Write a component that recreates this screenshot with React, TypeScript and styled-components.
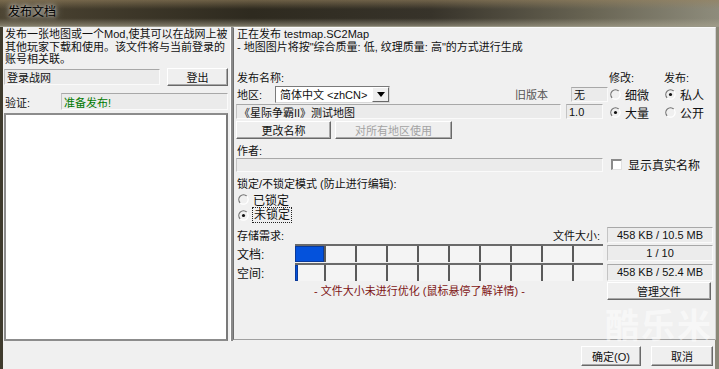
import React from "react";
import styled, { createGlobalStyle } from "styled-components";

const Global = createGlobalStyle`
  html, body { margin: 0; padding: 0; background: #f0f0f0; overflow: hidden; }
  * { box-sizing: border-box; }
`;

const FONT = `"Liberation Sans", "Noto Sans CJK SC", sans-serif`;

function Radio({ checked }: { checked?: boolean }) {
  return (
    <svg width="11" height="11" viewBox="0 0 12 12">
      <path d="M9.6 2.4 A5 5 0 0 0 2.4 9.6" fill="none" stroke="#707070" strokeWidth="1.3" />
      <path d="M2.4 9.6 A5 5 0 0 0 9.6 2.4" fill="none" stroke="#ffffff" strokeWidth="1.3" />
      {checked && <circle cx="6" cy="6" r="1.7" fill="#111" />}
    </svg>
  );
}

export default function App() {
  return (
    <>
      <Global />
      <Window>
        <TitleBar>
          <Title>发布文档</Title>
        </TitleBar>
        <Frame>
          <LeftPanel>
            <LeftGroup>
              <Intro>
                发布一张地图或一个Mod,使其可以在战网上被
                <br />
                其他玩家下载和使用。该文件将与当前登录的
                <br />
                账号相关联。
              </Intro>
              <LoginRow>
                <Field $w={156} $h={16}>登录战网</Field>
                <Button $w={61} $h={18}>登出</Button>
              </LoginRow>
              <VerifyRow>
                <Label>验证:</Label>
                <Field $w={167} $h={17} $color="#007a00">准备发布!</Field>
              </VerifyRow>
              <ListBox />
            </LeftGroup>
          </LeftPanel>

          <RightColumn>
            <RightGroup>
              <Info>
                正在发布 testmap.SC2Map
                <br />
                - 地图图片将按"综合质量: 低, 纹理质量: 高"的方式进行生成
              </Info>

              <TopArea>
                <MainCol>
                  <LabelRow>发布名称:</LabelRow>
                  <RegionRow>
                    <Label $w={39}>地区:</Label>
                    <Select>
                      <SelectText>简体中文 &lt;zhCN&gt;</SelectText>
                      <SelectArrow>
                        <svg width="8" height="5" viewBox="0 0 8 5">
                          <path d="M0 0 H8 L4 5 Z" fill="#000" />
                        </svg>
                      </SelectArrow>
                    </Select>
                    <OldLabel>旧版本</OldLabel>
                    <Field $w={37} $h={15}>无</Field>
                  </RegionRow>
                  <NameRow>
                    <Field $w={325} $h={15}>《星际争霸II》测试地图</Field>
                    <Field $w={37} $h={15}>1.0</Field>
                  </NameRow>
                  <ButtonRow>
                    <Button $w={95} $h={18}>更改名称</Button>
                    <Button $w={117} $h={18} $disabled>对所有地区使用</Button>
                  </ButtonRow>
                </MainCol>
                <RadioCol $w={55}>
                  <LabelRow>修改:</LabelRow>
                  <RadioRow $h={18}><Radio />细微</RadioRow>
                  <RadioRow $h={18}><Radio checked />大量</RadioRow>
                </RadioCol>
                <RadioCol $w={52}>
                  <LabelRow>发布:</LabelRow>
                  <RadioRow $h={18}><Radio checked />私人</RadioRow>
                  <RadioRow $h={18}><Radio />公开</RadioRow>
                </RadioCol>
              </TopArea>

              <AuthorLabel>作者:</AuthorLabel>
              <AuthorRow>
                <Field $w={367} $h={14} />
                <CheckRow>
                  <Check />
                  显示真实名称
                </CheckRow>
              </AuthorRow>

              <LockLabel>锁定/不锁定模式 (防止进行编辑):</LockLabel>
              <RadioRow $h={16}><Radio />已锁定</RadioRow>
              <RadioRow $h={16}><Radio checked /><Focus>未锁定</Focus></RadioRow>

              <Storage>
                <StorageHead>
                  <span>存储需求:</span>
                  <span>文件大小:</span>
                </StorageHead>
                <Value $h={16}>458 KB / 10.5 MB</Value>

                <BarRow>
                  <BarLabel>文档:</BarLabel>
                  <Bar>
                    {Array.from({ length: 10 }).map((_, i) => (
                      <Cell key={i}>{i === 0 && <Fill style={{ width: "100%" }} />}</Cell>
                    ))}
                  </Bar>
                </BarRow>
                <Value $h={16}>1 / 10</Value>

                <BarRow>
                  <BarLabel>空间:</BarLabel>
                  <Bar>
                    {Array.from({ length: 10 }).map((_, i) => (
                      <Cell key={i}>{i === 0 && <Fill style={{ width: 3 }} />}</Cell>
                    ))}
                  </Bar>
                </BarRow>
                <Value $h={17}>458 KB / 52.4 MB</Value>

                <Warning>- 文件大小未进行优化 (鼠标悬停了解详情) -</Warning>
                <Button $w={104} $h={18}>管理文件</Button>
              </Storage>
            </RightGroup>

            <Footer>
              <Button $w={60} $h={20}>确定(O)</Button>
              <Button $w={62} $h={20}>取消</Button>
            </Footer>
          </RightColumn>
        </Frame>
        <Watermark>酷乐米</Watermark>
      </Window>
    </>
  );
}

const Window = styled.div`
  position: relative;
  width: 719px;
  height: 369px;
  display: flex;
  flex-direction: column;
  font-family: ${FONT};
  font-size: 11px;
  color: #111;
  background: #f0f0f0;
  overflow: hidden;
`;

const TitleBar = styled.div`
  height: 27px;
  display: flex;
  align-items: flex-start;
  padding: 4px 0 0 5px;
  background:
    linear-gradient(to bottom, rgba(150, 130, 95, 0.6) 0%, rgba(0, 0, 0, 0) 35%, rgba(0, 0, 0, 0) 70%, rgba(170, 165, 145, 0.6) 100%),
    linear-gradient(to right, #4d4533 0%, #2e2a1f 35%, #37332a 60%, #686453 82%, #8e8c7c 100%);
  border-bottom: 1px solid #9a9888;
`;

const Title = styled.div`
  font-size: 12px;
  line-height: 16px;
  color: #000;
  padding: 0 3px;
  text-shadow: 0 0 4px rgba(255, 255, 255, 0.9), 0 0 8px rgba(255, 255, 255, 0.7);
`;

const Frame = styled.div`
  flex: 1;
  display: flex;
  border-left: 3px solid #3f3b2d;
  border-right: 4px solid #8a8878;
`;

const LeftPanel = styled.div`
  width: 230px;
  display: flex;
  flex-direction: column;
`;

const LeftGroup = styled.div`
  height: 314px;
  display: flex;
  flex-direction: column;
  padding: 1px 3px 0 1px;
  border-right: 2px solid #8a8a8a;
  box-shadow: inset -1px 0 0 #fff;
`;

const Intro = styled.div`
  line-height: 12.5px;
  padding-left: 1px;
  white-space: nowrap;
`;

const LoginRow = styled.div`
  display: flex;
  align-items: center;
  justify-content: space-between;
  margin-top: 2px;
  height: 19px;
`;

const VerifyRow = styled.div`
  display: flex;
  align-items: center;
  margin-top: 6px;
  height: 18px;
`;

const Label = styled.span<{ $w?: number }>`
  width: ${(p) => (p.$w ? `${p.$w}px` : "auto")};
  flex: ${(p) => (p.$w ? "none" : "1")};
  padding-left: 1px;
`;

const Field = styled.div<{ $w: number; $h: number; $color?: string }>`
  width: ${(p) => p.$w}px;
  height: ${(p) => p.$h}px;
  flex: none;
  display: flex;
  align-items: center;
  padding-left: 2px;
  white-space: nowrap;
  overflow: hidden;
  color: ${(p) => p.$color || "#111"};
  background: #ebebeb;
  border-top: 1px solid #a8a8a8;
  border-left: 1px solid #c4c4c4;
  border-bottom: 1px solid #fafafa;
  border-right: 1px solid #fafafa;
`;

const Button = styled.div<{ $w: number; $h: number; $disabled?: boolean }>`
  width: ${(p) => p.$w}px;
  height: ${(p) => p.$h}px;
  flex: none;
  display: flex;
  align-items: center;
  justify-content: center;
  font-size: 11px;
  color: ${(p) => (p.$disabled ? "#a3a3a3" : "#111")};
  background: #efefef;
  border-top: 1px solid #fff;
  border-left: 1px solid #fff;
  border-right: 1px solid #696969;
  border-bottom: 1px solid #696969;
  box-shadow: inset -1px -1px 0 #a8a8a8;
`;

const ListBox = styled.div`
  flex: 1;
  margin-top: 2px;
  width: 224px;
  background: #fff;
  border: 2px solid #8c8c8c;
  border-right-color: #7a7a7a;
`;

const RightColumn = styled.div`
  flex: 1;
  display: flex;
  flex-direction: column;
`;

const RightGroup = styled.div`
  height: 313px;
  display: flex;
  flex-direction: column;
  padding-left: 2px;
  border-left: 1px solid #6e6e6e;
  border-top: 1px solid #fafafa;
  border-right: 1px solid #cfcfcf;
  border-bottom: 1px solid #a0a0a0;
`;

const Info = styled.div`
  height: 41px;
  line-height: 12.5px;
  white-space: nowrap;
  padding-left: 1px;
`;

const TopArea = styled.div`
  display: flex;
`;

const MainCol = styled.div`
  width: 372px;
  display: flex;
  flex-direction: column;
`;

const LabelRow = styled.div`
  height: 16px;
  display: flex;
  align-items: center;
  padding-left: 1px;
`;

const RegionRow = styled.div`
  height: 18px;
  display: flex;
  align-items: center;
`;

const Select = styled.div`
  width: 115px;
  height: 17px;
  display: flex;
  align-items: stretch;
  background: #fff;
  border-top: 1px solid #7a7a7a;
  border-left: 1px solid #7a7a7a;
  border-bottom: 1px solid #d8d8d8;
  border-right: 1px solid #d8d8d8;
`;

const SelectText = styled.div`
  flex: 1;
  display: flex;
  align-items: center;
  padding-left: 4px;
  white-space: nowrap;
`;

const SelectArrow = styled.div`
  width: 17px;
  display: flex;
  align-items: center;
  justify-content: center;
  background: #efefef;
  border-top: 1px solid #fff;
  border-left: 1px solid #fff;
  border-right: 1px solid #696969;
  border-bottom: 1px solid #696969;
`;

const OldLabel = styled.span`
  margin-left: auto;
  width: 56px;
  color: #555;
`;

const NameRow = styled.div`
  margin-top: 1px;
  height: 16px;
  display: flex;
  gap: 5px;
`;

const ButtonRow = styled.div`
  margin-top: 1px;
  display: flex;
  gap: 4px;
`;

const RadioCol = styled.div<{ $w: number }>`
  width: ${(p) => p.$w}px;
  display: flex;
  flex-direction: column;
`;

const RadioRow = styled.div<{ $h: number }>`
  height: ${(p) => p.$h}px;
  display: flex;
  align-items: center;
  gap: 4px;
  padding-left: 2px;
  font-size: 12px;
`;

const AuthorLabel = styled.div`
  margin-top: 3px;
  height: 15px;
  display: flex;
  align-items: center;
  padding-left: 1px;
`;

const AuthorRow = styled.div`
  display: flex;
  align-items: center;
  gap: 8px;
  height: 15px;
`;

const CheckRow = styled.div`
  display: flex;
  align-items: center;
  gap: 6px;
  font-size: 12px;
`;

const Check = styled.span`
  width: 11px;
  height: 11px;
  background: #fff;
  border-top: 2px solid #8a8a8a;
  border-left: 2px solid #8a8a8a;
  border-bottom: 1px solid #e0e0e0;
  border-right: 1px solid #e0e0e0;
`;

const LockLabel = styled.div`
  margin-top: 3px;
  height: 16px;
  display: flex;
  align-items: center;
  padding-left: 1px;
`;

const Focus = styled.span`
  outline: 1px dotted #222;
  padding: 0 1px;
  line-height: 14px;
`;

const Storage = styled.div`
  margin-top: 3px;
  display: grid;
  grid-template-columns: 367px 106px;
  column-gap: 4px;
  row-gap: 1px;
  align-items: center;
`;

const StorageHead = styled.div`
  display: flex;
  justify-content: space-between;
  padding: 0 3px 0 1px;
  height: 17px;
  align-items: center;
`;

const Value = styled.div<{ $h: number }>`
  height: ${(p) => p.$h}px;
  display: flex;
  align-items: center;
  justify-content: center;
  background: #ececec;
  border-top: 1px solid #a8a8a8;
  border-left: 1px solid #c4c4c4;
  border-bottom: 1px solid #fafafa;
  border-right: 1px solid #fafafa;
  white-space: nowrap;
`;

const BarRow = styled.div`
  display: flex;
  align-items: center;
  height: 18px;
`;

const BarLabel = styled.span`
  width: 59px;
  padding-left: 1px;
  font-size: 12px;
`;

const Bar = styled.div`
  flex: 1;
  height: 18px;
  display: flex;
  border-top: 2px solid #6a6a6a;
  background: #f4f4f4;
`;

const Cell = styled.div`
  flex: 1;
  position: relative;
  border-left: 2px solid #5a5a5a;
  &:first-child {
    border-left: none;
  }
`;

const Fill = styled.div`
  position: absolute;
  left: 0;
  top: 0;
  bottom: 0;
  background: #0452dc;
  border: 1px solid #0a3a9a;
`;

const Warning = styled.div`
  text-align: center;
  color: #7e1515;
  font-size: 11px;
  margin-top: -2px;
`;

const Footer = styled.div`
  flex: 1;
  display: flex;
  justify-content: flex-end;
  align-items: center;
  gap: 10px;
  padding: 3px 3px 0 0;
`;

const Watermark = styled.div`
  position: absolute;
  right: 6px;
  top: 305px;
  font-size: 34px;
  line-height: 38px;
  font-weight: bold;
  letter-spacing: 2px;
  color: rgba(255, 255, 255, 0.5);
  pointer-events: none;
  font-family: "Noto Sans CJK SC", sans-serif;
`;
